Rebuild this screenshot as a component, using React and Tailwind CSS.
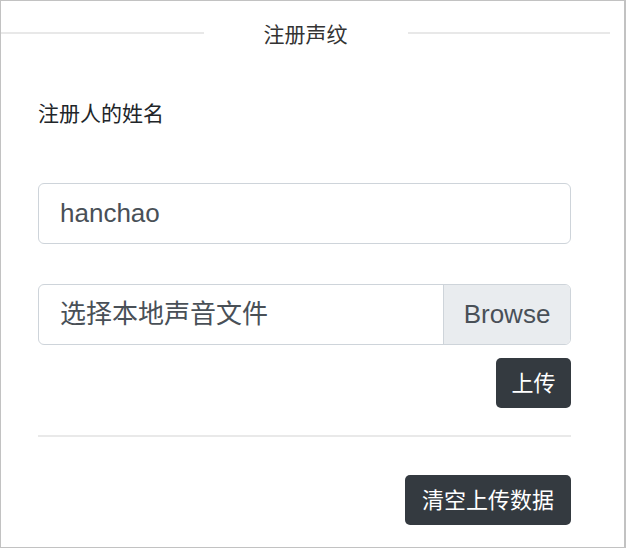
export default function App() {
  return (
    <div className="w-[626px] h-[548px] overflow-hidden border border-r-2 border-[#c2c2c2] bg-white font-['Liberation_Sans','Noto_Sans_CJK_SC',sans-serif] text-[#212529]">
      <div className="mt-[12px] mr-[14px] flex h-[40px] items-center">
        <div className="h-[2px] flex-1 bg-[#e8e8e8]" />
        <div className="w-[204px] pt-[3px] text-center text-[21px] leading-[40px] text-[#333]">注册声纹</div>
        <div className="h-[2px] flex-1 bg-[#e8e8e8]" />
      </div>

      <div className="ml-[37px] flex w-[533px] flex-col">
        <label className="mt-[46px] text-[21px] leading-[30px]">注册人的姓名</label>

        <div className="mt-[54px] flex h-[61px] items-center rounded-[6px] border border-[#ced4da] px-[21px] text-[26px] text-[#495057]">
          hanchao
        </div>

        <div className="mt-[40px] flex h-[61px] overflow-hidden rounded-[6px] border border-[#ced4da] text-[26px] text-[#495057]">
          <div className="flex flex-1 items-center px-[21px]">选择本地声音文件</div>
          <div className="flex w-[127px] items-center justify-center border-l border-[#ced4da] bg-[#e9ecef]">Browse</div>
        </div>

        <button className="mt-[13px] flex h-[50px] w-[75px] items-center justify-center self-end rounded-[5px] bg-[#343a40] text-[22px] text-white">
          上传
        </button>

        <div className="mt-[27px] h-[2px] bg-[#e9e9e9]" />

        <button className="mt-[38px] flex h-[50px] w-[166px] items-center justify-center self-end rounded-[5px] bg-[#343a40] text-[22px] text-white">
          清空上传数据
        </button>
      </div>
    </div>
  )
}
